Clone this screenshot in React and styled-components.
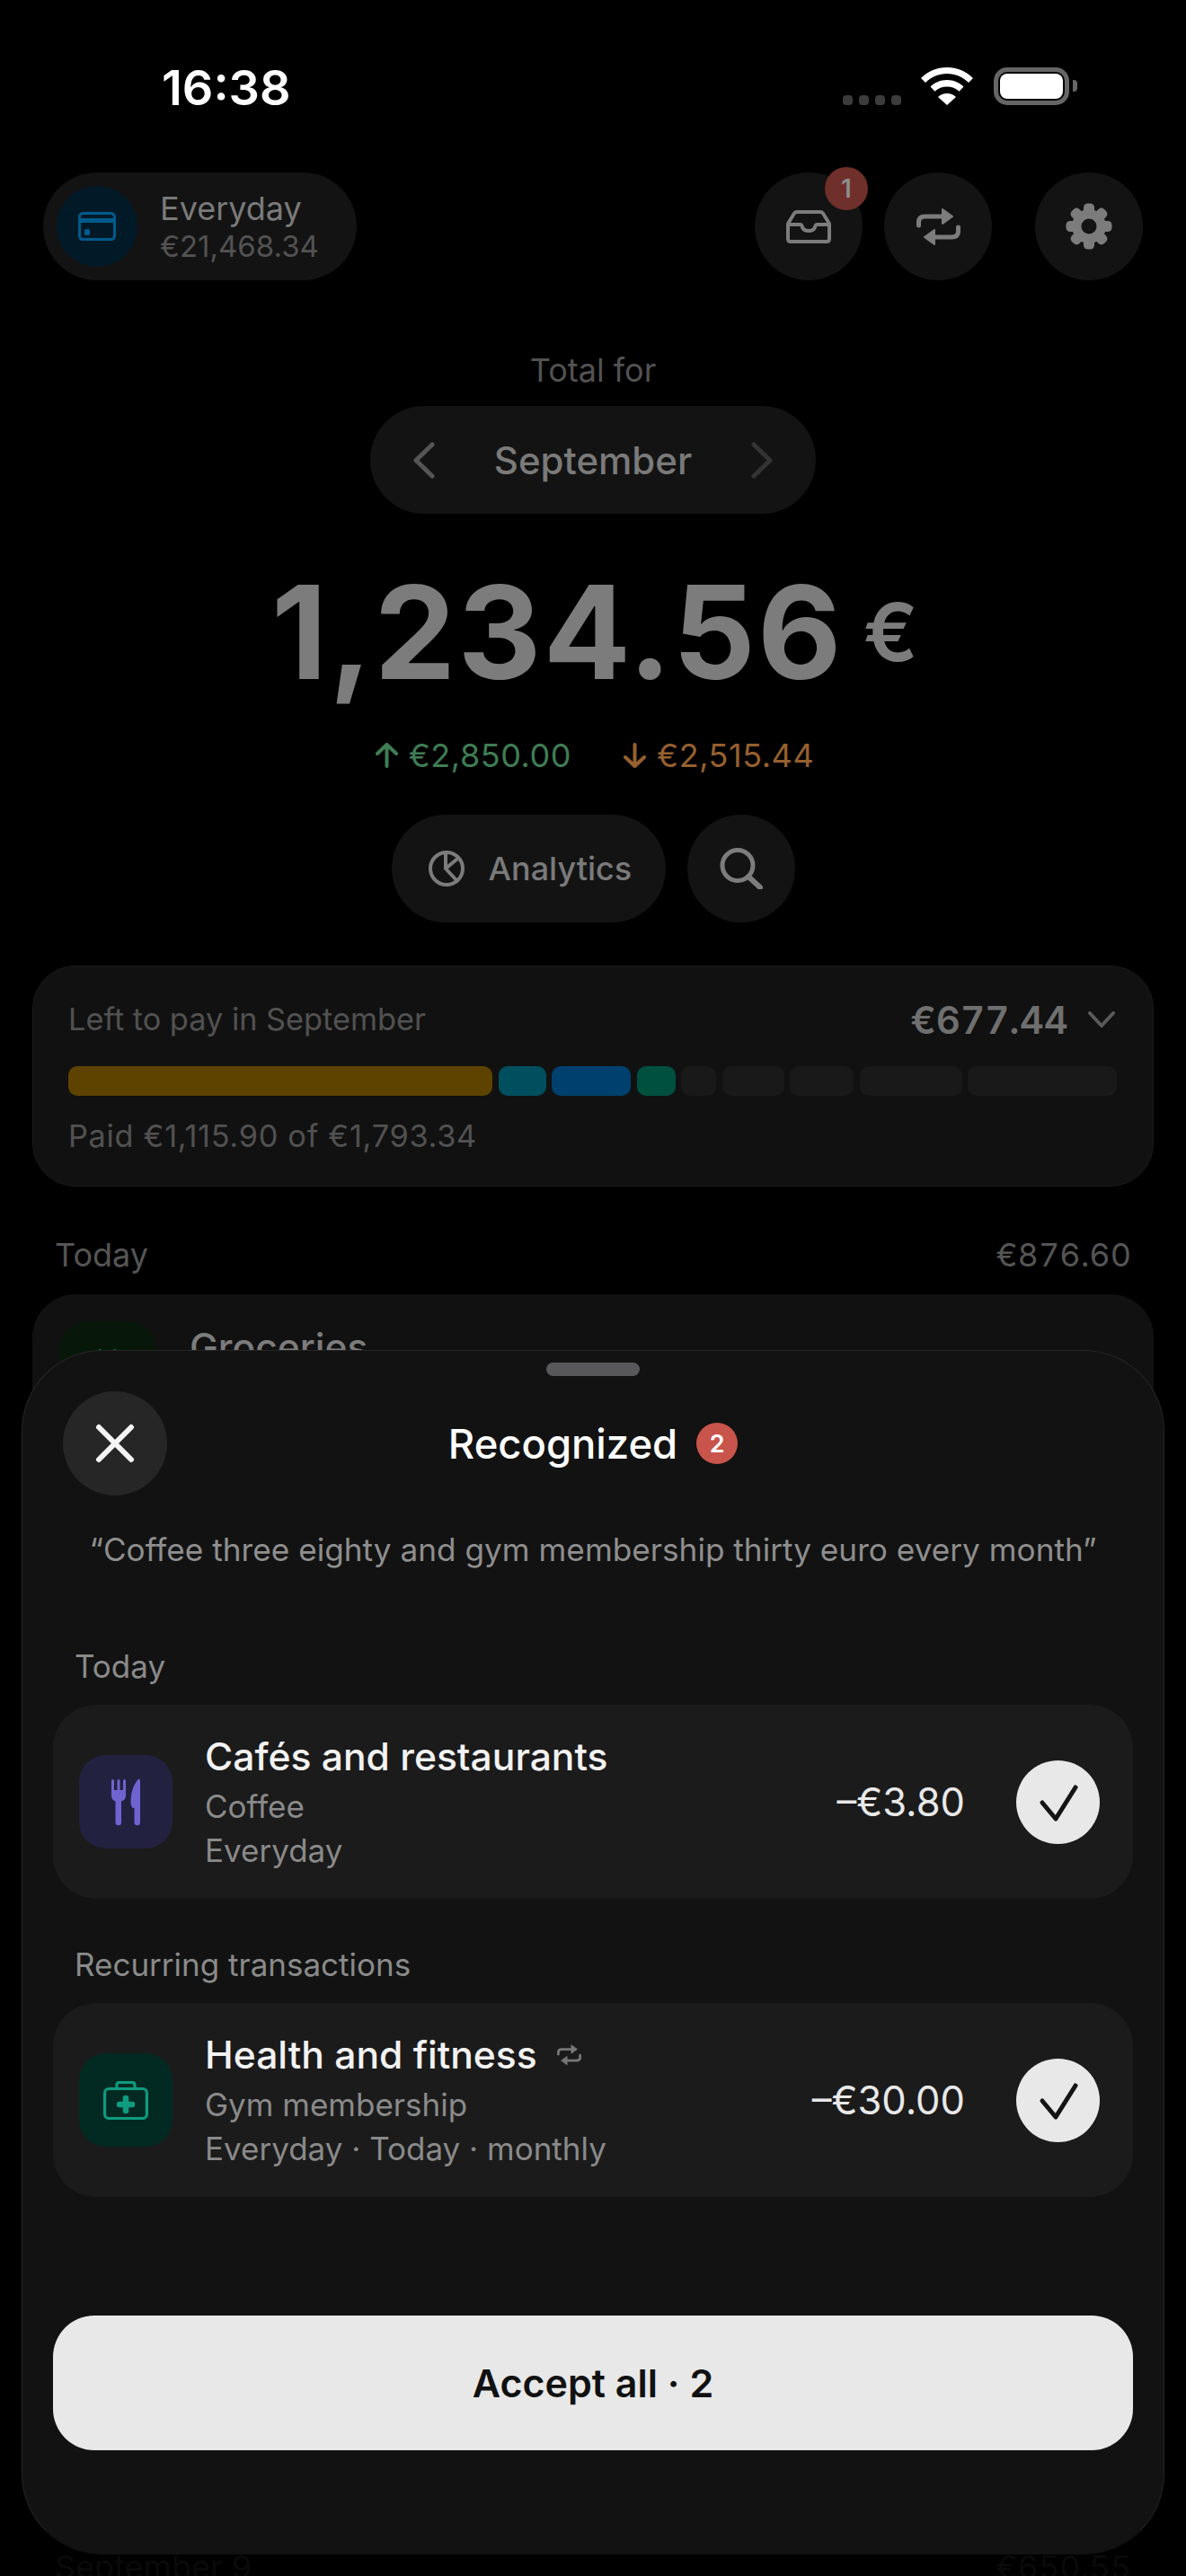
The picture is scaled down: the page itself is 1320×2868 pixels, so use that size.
import React from 'react'
import styled, { createGlobalStyle } from 'styled-components'

const GlobalStyle = createGlobalStyle`
  html, body {
    margin: 0;
    padding: 0;
    background: #000;
  }
  * {
    box-sizing: border-box;
  }
`

const Screen = styled.div`
  position: relative;
  width: 1320px;
  height: 2868px;
  overflow: hidden;
  background: #000;
  font-family: Inter, "Noto Sans", sans-serif;
`

const StatusBar = styled.div`
  height: 192px;
  padding: 66px 130px 0 180px;
  display: flex;
  justify-content: space-between;
  align-items: flex-start;
`

const Time = styled.div`
  font-size: 54px;
  line-height: 64px;
  font-weight: 600;
  color: #fff;
`

const StatusIcons = styled.div`
  display: flex;
  align-items: flex-end;
  height: 42px;
  margin-top: 9px;
`

const SignalDots = styled.div`
  display: flex;
  gap: 7px;
  margin-right: 22px;
`

const SignalDot = styled.span`
  width: 11px;
  height: 11px;
  border-radius: 4px;
  background: #3c3c3c;
`

const Battery = styled.div`
  position: relative;
  width: 84px;
  height: 42px;
  margin-left: 23px;
  padding: 2px;
  border: 5px solid #666;
  border-radius: 15px;
`

const BatteryFill = styled.div`
  width: 100%;
  height: 100%;
  border-radius: 8px;
  background: #fff;
`

const BatteryCap = styled.span`
  position: absolute;
  right: -14px;
  top: 9px;
  width: 5px;
  height: 13px;
  border-radius: 0 4px 4px 0;
  background: #666;
`

const Header = styled.div`
  height: 120px;
  padding: 0 48px;
  display: flex;
  justify-content: space-between;
`

const AccountPill = styled.div`
  width: 349px;
  height: 120px;
  padding: 15px;
  display: flex;
  align-items: center;
  gap: 25px;
  border-radius: 60px;
  background: #131313;
`

const AccountAvatar = styled.div`
  width: 90px;
  height: 90px;
  border-radius: 50%;
  background: #021a28;
  display: flex;
  align-items: center;
  justify-content: center;
`

const AccountName = styled.div`
  font-size: 36px;
  line-height: 44px;
  color: #7a7a7a;
`

const AccountBalance = styled.div`
  font-size: 33px;
  line-height: 40px;
  color: #525252;
`

const HeaderButtons = styled.div`
  display: flex;
  gap: 24px;
`

const RoundButton = styled.div`
  position: relative;
  width: 120px;
  height: 120px;
  margin-left: ${p => p.$push || 0}px;
  border-radius: 50%;
  background: #131313;
  display: flex;
  align-items: center;
  justify-content: center;
`

const CountBadge = styled.span`
  position: absolute;
  top: -6px;
  right: -6px;
  width: 48px;
  height: 48px;
  border-radius: 50%;
  background: #6f2f2a;
  color: #8c8c8c;
  font-size: 28px;
  font-weight: 600;
  display: flex;
  align-items: center;
  justify-content: center;
`

const Summary = styled.div`
  display: flex;
  flex-direction: column;
  align-items: center;
`

const TotalLabel = styled.div`
  margin-top: 76px;
  font-size: 36px;
  line-height: 48px;
  color: #525252;
`

const MonthPicker = styled.div`
  width: 496px;
  height: 120px;
  margin-top: 16px;
  padding: 0 47px;
  border-radius: 60px;
  background: #131313;
  display: flex;
  align-items: center;
  justify-content: space-between;
`

const MonthName = styled.div`
  font-size: 42px;
  font-weight: 500;
  color: #7a7a7a;
`

const Amount = styled.div`
  height: 144px;
  margin-top: 60px;
  padding-left: 6px;
  display: flex;
  align-items: center;
  font-size: 144px;
  line-height: 144px;
  font-weight: 700;
  letter-spacing: 2.2px;
  color: #7c7c7c;
`

const AmountCurrency = styled.span`
  margin-left: 22px;
  font-size: 90px;
  line-height: 90px;
  font-weight: 600;
`

const Flows = styled.div`
  margin-top: 41px;
  padding-left: 4px;
  display: flex;
  gap: 58px;
`

const Flow = styled.div`
  display: flex;
  align-items: center;
  gap: 12px;
  font-size: 36px;
  line-height: 48px;
  letter-spacing: 0.55px;
  color: ${p => p.$color};
`

const Actions = styled.div`
  margin-top: 42px;
  display: flex;
  gap: 24px;
`

const AnalyticsButton = styled.div`
  width: 305px;
  height: 120px;
  padding-left: 41px;
  border-radius: 60px;
  background: #131313;
  display: flex;
  align-items: center;
  gap: 27px;
  font-size: 36px;
  font-weight: 500;
  color: #7a7a7a;
`

const PayCard = styled.div`
  margin: 48px 36px 0;
  height: 246px;
  padding: 35px 39px 0;
  border: 1px solid #1a1a1a;
  border-radius: 48px;
  background: #111;
`

const PayRow = styled.div`
  height: 48px;
  display: flex;
  justify-content: space-between;
  align-items: center;
`

const PayLabel = styled.div`
  font-size: 34.3px;
  line-height: 48px;
  color: #515151;
`

const PayAmount = styled.div`
  display: flex;
  align-items: center;
  gap: 22px;
  padding-right: 3px;
  font-size: 42px;
  font-weight: 600;
  font-variant-numeric: tabular-nums;
  color: #6f6f6f;
`

const PayBar = styled.div`
  margin-top: 28px;
  display: flex;
  gap: 6.5px;
`

const PaySegment = styled.div`
  height: 33px;
  border-radius: 10px;
  background: ${p => p.$color};
`

const PayNote = styled(PayLabel)`
  margin-top: 21px;
  letter-spacing: 0.7px;
`

const DayHeader = styled.div`
  margin-top: ${p => p.$top}px;
  padding: 0 61px;
  display: flex;
  justify-content: space-between;
  font-size: 36px;
  line-height: 48px;
  font-variant-numeric: tabular-nums;
  color: ${p => p.$color};
`

const DayCard = styled.div`
  height: 1300px;
  margin: 20px 36px 0;
  padding: 30px;
  border-radius: 48px;
  background: #111;
  display: flex;
  gap: 37px;
`

const DayIcon = styled.div`
  width: 108px;
  height: 108px;
  padding-top: 30px;
  border-radius: 32px;
  background: #07170a;
  display: flex;
  justify-content: center;
`

const DayTitle = styled.div`
  margin-top: 2px;
  font-size: 42.6px;
  line-height: 54px;
  font-weight: 500;
  color: #7c7c7c;
`

const Sheet = styled.div`
  position: absolute;
  left: 24px;
  top: 1503px;
  width: 1272px;
  height: 1341px;
  padding: 0 34px;
  border: 1px solid #262626;
  border-bottom-color: #121212;
  border-radius: 90px;
  background: #121212;
`

const Handle = styled.div`
  width: 104px;
  height: 15px;
  margin: 13px auto 0;
  border-radius: 8px;
  background: #58585b;
`

const SheetHeader = styled.div`
  margin-top: 17px;
  padding: 0 11px;
  display: grid;
  grid-template-columns: 116px 1fr 116px;
  align-items: center;
`

const CloseButton = styled.div`
  width: 116px;
  height: 116px;
  border-radius: 50%;
  background: #262626;
  display: flex;
  align-items: center;
  justify-content: center;
`

const SheetTitle = styled.div`
  display: flex;
  align-items: center;
  justify-content: center;
  gap: 21px;
  font-size: 45.4px;
  font-weight: 500;
  color: #fff;
`

const TitleBadge = styled.span`
  width: 46px;
  height: 46px;
  border-radius: 50%;
  background: #c9544b;
  color: #fff;
  font-size: 27px;
  font-weight: 600;
  display: flex;
  align-items: center;
  justify-content: center;
`

const Quote = styled.div`
  margin-top: 36px;
  font-size: 35.2px;
  line-height: 48px;
  text-align: center;
  color: #8e8e8e;
`

const SectionLabel = styled.div`
  margin-top: ${p => p.$top}px;
  padding-left: 24px;
  font-size: 35px;
  line-height: 48px;
  color: #8a8a8a;
`

const TxRow = styled.div`
  height: 216px;
  margin-top: 19px;
  padding: 0 37px 0 29px;
  border-radius: 48px;
  background: #1b1b1b;
  display: flex;
  align-items: center;
`

const TxIcon = styled.div`
  width: 104px;
  height: 104px;
  border-radius: 30px;
  background: ${p => p.$bg};
  display: flex;
  align-items: center;
  justify-content: center;
`

const TxText = styled.div`
  flex: 1;
  margin: 2px 0 0 36px;
`

const TxTitle = styled.div`
  display: flex;
  align-items: center;
  gap: 22px;
  margin-bottom: 4px;
  font-size: 42.6px;
  line-height: 54px;
  font-weight: 500;
  color: #f2f2f2;
`

const TxSub = styled.div`
  font-size: 35px;
  line-height: 49px;
  color: #8a8a8a;
`

const TxAmount = styled.div`
  font-size: 43.5px;
  color: #e8e8e8;
`

const CheckCircle = styled.div`
  width: 93px;
  height: 93px;
  margin-left: 57px;
  border-radius: 50%;
  background: #e8e8e8;
`

const AcceptButton = styled.div`
  height: 150px;
  margin-top: 132px;
  border-radius: 46px;
  background: #e8e8e8;
  display: flex;
  align-items: center;
  justify-content: center;
  font-size: 43px;
  font-weight: 600;
  color: #111;
`

const RepeatIcon = ({ size = 49, color = '#7c7c7c' }) => (
  <svg width={size} height={size * 43 / 49} viewBox="0 0 49 43" fill="none">
    <path d="M2.5 20v-3.500Q2.500 10 9.500 10H30M46.500 22v4.500q0 6.500-7 6.500H19" stroke={color} strokeWidth="5" strokeLinecap="round" />
    <path d="M29 2l11 8-11 8zM20 25L9 33l11 8z" fill={color} stroke={color} strokeWidth="2" strokeLinejoin="round" />
  </svg>
)

const InboxIcon = () => (
  <svg width="50" height="37" viewBox="0 0 50 37" fill="none" stroke="#7c7c7c" strokeWidth="4" strokeLinejoin="round">
    <path d="M2 15 9 3.500Q10 2 12 2h26q2 0 3 1.500L48 15v17q0 3-3 3H5q-3 0-3-3z" />
    <path d="M2 16h14c1 0 1.500 1 2 3 1 3 4 4 7 4s6-1 7-4c.5-2 1-3 2-3h14" />
  </svg>
)

const GearIcon = () => (
  <svg width="52" height="52" viewBox="0 0 52 52">
    <circle cx="26" cy="26" r="19" fill="#7c7c7c" />
    {[0, 45, 90, 135, 180, 225, 270, 315].map(a => (
      <rect key={a} x="20" y="0.5" width="12" height="14" rx="4.5" fill="#7c7c7c" transform={`rotate(${a} 26 26)`} />
    ))}
    <circle cx="26" cy="26" r="8.500" fill="#131313" />
  </svg>
)

const CardIcon = () => (
  <svg width="42" height="32" viewBox="0 0 42 32">
    <rect x="1.500" y="1.500" width="39" height="29" rx="4" fill="none" stroke="#005a8c" strokeWidth="3" />
    <rect x="1.500" y="7" width="39" height="5" fill="#005a8c" />
    <rect x="7" y="19" width="6" height="7" rx="1.500" fill="#005a8c" />
  </svg>
)

const Chevron = ({ dir, color }) => (
  <svg width="25" height="41" viewBox="0 0 25 41" fill="none">
    <path d={dir === 'left' ? 'M22 3 4 20.500 22 38' : 'M3 3l18 17.500L3 38'} stroke={color} strokeWidth="5" strokeLinecap="round" strokeLinejoin="round" />
  </svg>
)

const ChevronDown = () => (
  <svg width="30" height="18" viewBox="0 0 30 18" fill="none">
    <path d="M2 2l13 14L28 2" stroke="#5a5a5a" strokeWidth="4" strokeLinecap="round" strokeLinejoin="round" />
  </svg>
)

const FlowArrow = ({ up, color }) => (
  <svg width="25" height="28" viewBox="0 0 25 28" fill="none">
    <path d={up ? 'M12.500 26V2M2 12 12.500 2 23 12' : 'M12.500 2v24M2 16l10.500 10L23 16'} stroke={color} strokeWidth="4" strokeLinecap="round" strokeLinejoin="round" />
  </svg>
)

const PieIcon = () => (
  <svg width="40" height="40" viewBox="0 0 40 40" fill="none" stroke="#7c7c7c" strokeWidth="4" strokeLinecap="round" strokeLinejoin="round">
    <circle cx="20" cy="20" r="18" />
    <path d="M19 3v17M19 20l12-10M19 20l12 13" />
  </svg>
)

const SearchIcon = () => (
  <svg width="48" height="46" viewBox="0 0 48 46" fill="none" stroke="#7c7c7c" strokeWidth="5" strokeLinecap="round">
    <circle cx="20" cy="19.500" r="17" />
    <path d="M32 32l13 12" strokeWidth="6" />
  </svg>
)

const CloseIcon = () => (
  <svg width="44" height="44" viewBox="0 0 44 44" fill="none" stroke="#f4f4f4" strokeWidth="6" strokeLinecap="round">
    <path d="M4 4l36 36M40 4 4 40" />
  </svg>
)

const ForkKnifeIcon = () => (
  <svg width="32" height="53" viewBox="0 0 32 53" fill="#6f63d0">
    <rect x="0" y="1" width="3" height="20" rx="1.500" />
    <rect x="6.500" y="1" width="3" height="20" rx="1.500" />
    <rect x="13" y="1" width="3" height="20" rx="1.500" />
    <path d="M0 13h16v6q0 5-5 6.500V49a3 3 0 0 1-6.500 0V25.500Q0 24 0 19z" />
    <path d="M32 2.500V49a3 3 0 0 1-6.500 0V33H24q-2.500-2-2.500-6C21.500 15 25 6 30 1q2-1 2 1.500z" />
  </svg>
)

const MedkitIcon = () => (
  <svg width="50" height="43" viewBox="0 0 50 43" fill="none" stroke="#0f9b7f" strokeWidth="3.200">
    <rect x="1.600" y="8.500" width="46.800" height="33" rx="4.500" />
    <path d="M15 8.500V4.500q0-3 3-3h14q3 0 3 3v4" />
    <path d="M25 19v14M18 26h14" strokeWidth="6.500" strokeLinecap="round" />
  </svg>
)

const CheckIcon = () => (
  <svg width="93" height="93" viewBox="0 0 93 93" fill="none">
    <path d="M29 47l15 18 22-35" stroke="#141414" strokeWidth="5" strokeLinecap="round" strokeLinejoin="round" />
  </svg>
)

const WifiIcon = () => (
  <svg width="58" height="42" viewBox="0 0 58 42" fill="#fff">
    <path d="M29 0c11 0 21 4 29 12l-5 5c-6.500-6.500-15-10-24-10S11.500 10.500 5 17L0 12C8 4 18 0 29 0z" />
    <path d="M29 14c7 0 13.500 2.700 18.500 7.500l-5 5.300C39 23.300 34 21.500 29 21.500s-10 1.800-13.500 5.300l-5-5.300C15.500 16.700 22 14 29 14z" />
    <path d="M29 29c3.800 0 7.200 1.300 10 3.900L29 42 19 32.900c2.800-2.600 6.200-3.900 10-3.900z" />
  </svg>
)

const segments = [
  { w: 472, color: '#5e4300' },
  { w: 53, color: '#004f5f' },
  { w: 88, color: '#00406e' },
  { w: 43, color: '#005040' },
  { w: 39, color: '#191919' },
  { w: 69, color: '#191919' },
  { w: 71, color: '#191919' },
  { w: 114, color: '#191919' },
  { w: 166, color: '#191919' },
]

const App = () => (
  <Screen>
    <GlobalStyle />
    <StatusBar>
      <Time>16:38</Time>
      <StatusIcons>
        <SignalDots>
          <SignalDot />
          <SignalDot />
          <SignalDot />
          <SignalDot />
        </SignalDots>
        <WifiIcon />
        <Battery>
          <BatteryFill />
          <BatteryCap />
        </Battery>
      </StatusIcons>
    </StatusBar>

    <Header>
      <AccountPill>
        <AccountAvatar>
          <CardIcon />
        </AccountAvatar>
        <div>
          <AccountName>Everyday</AccountName>
          <AccountBalance>€21,468.34</AccountBalance>
        </div>
      </AccountPill>
      <HeaderButtons>
        <RoundButton>
          <InboxIcon />
          <CountBadge>1</CountBadge>
        </RoundButton>
        <RoundButton>
          <RepeatIcon />
        </RoundButton>
        <RoundButton $push={24}>
          <GearIcon />
        </RoundButton>
      </HeaderButtons>
    </Header>

    <Summary>
      <TotalLabel>Total for</TotalLabel>
      <MonthPicker>
        <Chevron dir="left" color="#555" />
        <MonthName>September</MonthName>
        <Chevron dir="right" color="#333" />
      </MonthPicker>
      <Amount>
        1,234.56
        <AmountCurrency>€</AmountCurrency>
      </Amount>
      <Flows>
        <Flow $color="#3f7d55">
          <FlowArrow up color="#3f7d55" />
          €2,850.00
        </Flow>
        <Flow $color="#96602f">
          <FlowArrow color="#96602f" />
          €2,515.44
        </Flow>
      </Flows>
      <Actions>
        <AnalyticsButton>
          <PieIcon />
          Analytics
        </AnalyticsButton>
        <RoundButton>
          <SearchIcon />
        </RoundButton>
      </Actions>
    </Summary>

    <PayCard>
      <PayRow>
        <PayLabel>Left to pay in September</PayLabel>
        <PayAmount>
          €677.44
          <ChevronDown />
        </PayAmount>
      </PayRow>
      <PayBar>
        {segments.map((s, i) => (
          <PaySegment key={i} $color={s.color} style={{ width: s.w }} />
        ))}
      </PayBar>
      <PayNote>Paid €1,115.90 of €1,793.34</PayNote>
    </PayCard>

    <DayHeader $top={52} $color="#555">
      <span>Today</span>
      <span>€876.60</span>
    </DayHeader>
    <DayCard>
      <DayIcon>
        <svg width="26" height="8" viewBox="0 0 26 8" fill="#1c6e35">
          <rect x="2" y="1" width="4" height="7" rx="2" />
          <rect x="19" y="1" width="4" height="7" rx="2" />
        </svg>
      </DayIcon>
      <DayTitle>Groceries</DayTitle>
    </DayCard>
    <DayHeader $top={93} $color="#0a0a0a">
      <span>September 9</span>
      <span>€650.55</span>
    </DayHeader>

    <Sheet>
      <Handle />
      <SheetHeader>
        <CloseButton>
          <CloseIcon />
        </CloseButton>
        <SheetTitle>
          Recognized
          <TitleBadge>2</TitleBadge>
        </SheetTitle>
      </SheetHeader>
      <Quote>“Coffee three eighty and gym membership thirty euro every month”</Quote>

      <SectionLabel $top={82}>Today</SectionLabel>
      <TxRow>
        <TxIcon $bg="#222240">
          <ForkKnifeIcon />
        </TxIcon>
        <TxText>
          <TxTitle>Cafés and restaurants</TxTitle>
          <TxSub>Coffee</TxSub>
          <TxSub>Everyday</TxSub>
        </TxText>
        <TxAmount>–€3.80</TxAmount>
        <CheckCircle>
          <CheckIcon />
        </CheckCircle>
      </TxRow>

      <SectionLabel $top={49}>Recurring transactions</SectionLabel>
      <TxRow>
        <TxIcon $bg="#032a22">
          <MedkitIcon />
        </TxIcon>
        <TxText>
          <TxTitle>
            Health and fitness
            <RepeatIcon size={27} color="#777" />
          </TxTitle>
          <TxSub>Gym membership</TxSub>
          <TxSub>Everyday · Today · monthly</TxSub>
        </TxText>
        <TxAmount>–€30.00</TxAmount>
        <CheckCircle>
          <CheckIcon />
        </CheckCircle>
      </TxRow>

      <AcceptButton>Accept all · 2</AcceptButton>
    </Sheet>
  </Screen>
)

export default App
